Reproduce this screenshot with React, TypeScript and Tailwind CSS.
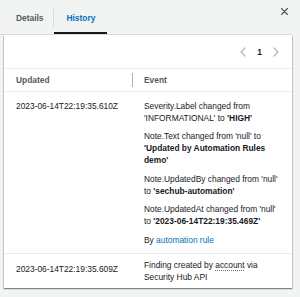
import React from "react";

const Chevron = ({ dir }: { dir: "left" | "right" }) => (
  <svg width="6" height="10" viewBox="0 0 6 10" fill="none">
    <path
      d={dir === "left" ? "M5 1 L1 5 L5 9" : "M1 1 L5 5 L1 9"}
      stroke="#aab7b8"
      strokeWidth="1.2"
      strokeLinecap="round"
      strokeLinejoin="round"
    />
  </svg>
);

export default function App() {
  return (
    <div
      className="w-[300px] h-[297px] bg-[#f2f3f3] text-[#16191f] text-[8.4px] leading-[12px] overflow-hidden"
      style={{ fontFamily: '"Liberation Sans", Arial, sans-serif' }}
    >
      {/* Tab bar */}
      <div className="flex items-start w-[292px] h-[35px] border-b border-[#d5dbdb]">
        <div className="ml-[4px] h-[34px] pt-[12px] pl-3 pr-[10px] font-bold text-[#545b64]">Details</div>
        <div className="w-px h-[18px] mt-[9px] bg-[#d5dbdb]" />
        <div className="h-[34px] pt-[12px] px-3 font-bold text-[#0073bb] border-b-2 border-[#16191f]">History</div>
        <div className="ml-auto mr-[4px] mt-[8px]">
          <svg width="7" height="7" viewBox="0 0 7 7">
            <path d="M0.5 0.5 L6.5 6.5 M6.5 0.5 L0.5 6.5" stroke="#545b64" strokeWidth="1.2" strokeLinecap="round" />
          </svg>
        </div>
      </div>

      {/* Panel */}
      <div className="ml-[4px] w-[288px] bg-white shadow-[0_1px_1px_0_rgba(0,28,36,0.3),1px_1px_1px_0_rgba(0,28,36,0.15),-1px_1px_1px_0_rgba(0,28,36,0.15)]">
        {/* Pagination */}
        <div className="h-[34px] flex items-center justify-end pr-[13px] gap-[9px] border-b border-[#eaeded]">
          <Chevron dir="left" />
          <span className="font-bold px-[2px]">1</span>
          <Chevron dir="right" />
        </div>

        {/* Header */}
        <div className="grid grid-cols-[128px_1fr] h-[23px] border-b border-[#eaeded] font-bold text-[#545b64]">
          <div className="pl-3 flex items-center">Updated</div>
          <div className="flex items-center">
            <div className="w-px h-[14px] bg-[#aab7b8]" />
            <span className="ml-[11px]">Event</span>
          </div>
        </div>

        {/* Row 1 */}
        <div className="grid grid-cols-[128px_1fr] pt-[8px] pb-[7px] border-b border-[#eaeded]">
          <div className="pl-3">2023-06-14T22:19:35.610Z</div>
          <div className="pl-3 pr-[11px]">
            <p>
              Severity.Label changed from 'INFORMATIONAL' to <b>'HIGH'</b>
            </p>
            <p className="mt-[6px]">
              Note.Text changed from 'null' to <b>'Updated by Automation Rules demo'</b>
            </p>
            <p className="mt-[7px]">
              Note.UpdatedBy changed from 'null' to <b>'sechub-automation'</b>
            </p>
            <p className="mt-[6px]">
              Note.UpdatedAt changed from 'null' to <b>'2023-06-14T22:19:35.469Z'</b>
            </p>
            <p className="mt-[7px]">
              By <span className="text-[#0073bb]">automation rule</span>
            </p>
          </div>
        </div>

        {/* Row 2 */}
        <div className="grid grid-cols-[128px_1fr] pt-[5px] pb-[5px]">
          <div className="pl-3 pt-[4px]">2023-06-14T22:19:35.609Z</div>
          <div className="pl-3 pr-[11px]">
            <p>
              Finding created by{" "}
              <span className="underline decoration-dotted decoration-[#687078] underline-offset-2">account</span> via
              Security Hub API
            </p>
          </div>
        </div>
      </div>
    </div>
  );
}
